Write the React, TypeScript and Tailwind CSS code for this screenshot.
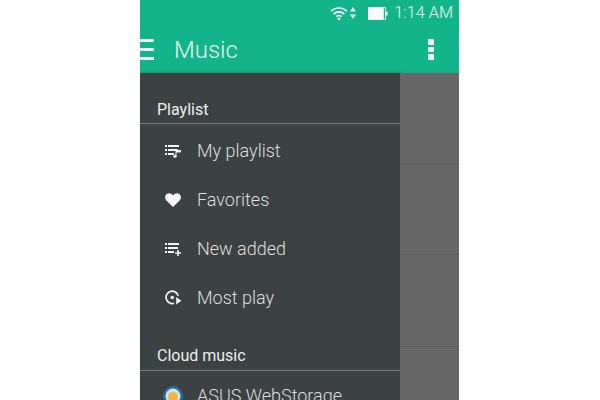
const Row = ({ icon, label }: { icon: React.ReactNode; label: string }) => (
	<div className="flex h-[49px] items-center">
		<div className="flex w-[57px] justify-center pl-[9px]">{icon}</div>
		<span className="text-[18px] font-light text-[#dcdfde]">{label}</span>
	</div>
)

const ListLines = ({ children }: { children?: React.ReactNode }) => (
	<svg width="18" height="14" viewBox="0 0 18 14" fill="#f2f4f3">
		<rect x="1" y="1" width="2" height="2" />
		<rect x="4" y="1" width="11" height="2" />
		<rect x="1" y="5" width="2" height="2" />
		<rect x="4" y="5" width="10" height="2" />
		<rect x="1" y="9" width="2" height="2" />
		<rect x="4" y="9" width="6" height="2" />
		{children}
	</svg>
)

const SectionTitle = ({ label }: { label: string }) => (
	<div className="h-[20px] pl-[17px] text-[16px] leading-[20px] text-[#eceeed]">{label}</div>
)

export default function App() {
	return (
		<div className="h-[400px] w-[600px] overflow-hidden bg-white font-['Roboto',sans-serif]">
			<div className="ml-[140px] flex h-full w-[319px] flex-col">
				<div className="h-[73px] shrink-0 bg-[#14b48b] text-white">
					<div className="flex h-[26px] items-center justify-end pr-[6px]">
						<svg width="18" height="15" viewBox="0 0 17 14" fill="none" stroke="#f4fbf8" strokeWidth="1.5">
							<path d="M1 5 A 10.5 10.5 0 0 1 16 5" />
							<path d="M3.5 7.6 A 7 7 0 0 1 13.5 7.6" />
							<path d="M6 10 A 3.5 3.5 0 0 1 11 10" />
							<circle cx="8.5" cy="12" r="1.3" fill="#f4fbf8" stroke="none" />
						</svg>
						<svg className="ml-[2px] mr-[12px]" width="6" height="12" viewBox="0 0 6 12" fill="#e4f5ef">
							<path d="M3 0 L6 4.5 H0 Z" />
							<path d="M3 12 L0 7.5 H6 Z" />
						</svg>
						<svg className="mr-[6px]" width="20" height="13" viewBox="0 0 20 13" fill="#f6fbf9">
							<rect x="0" y="0" width="15" height="13" />
							<rect x="15.4" y="0.4" width="2" height="12.2" fill="none" stroke="#f6fbf9" strokeWidth="0.8" />
							<rect x="17.5" y="4.5" width="2" height="4" />
						</svg>
						<span className="text-[16.3px] font-light leading-none text-[#e9f7f2]">1:14 AM</span>
					</div>
					<div className="flex h-[47px] items-center justify-between pr-[25px]">
						<div className="flex items-center gap-[20px]">
							<div className="flex w-[14px] flex-col gap-[6px]">
								<div className="h-[3px] bg-[#f0faf7]" />
								<div className="h-[3px] bg-[#f0faf7]" />
								<div className="h-[3px] bg-[#f0faf7]" />
							</div>
							<span className="text-[24px] font-light leading-none text-[#e6f7f2]">Music</span>
						</div>
						<div className="flex flex-col gap-[2px]">
							<div className="h-[6px] w-[6px] bg-[#eef9f6]" />
							<div className="h-[5px] w-[6px] bg-[#eef9f6]" />
							<div className="h-[6px] w-[6px] bg-[#eef9f6]" />
						</div>
					</div>
				</div>
				<div className="flex min-h-0 flex-1">
					<div className="w-[260px] shrink-0 overflow-hidden bg-[#3c4141] pt-[27px] shadow-[2px_0_3px_rgba(40,40,40,0.45)]">
						<SectionTitle label="Playlist" />
						<div className="mt-[3px] h-px bg-[#777a7a]" />
						<div className="mt-[2px]">
							<Row
								label="My playlist"
								icon={
									<ListLines>
										<path d="M12 8 V12.5 M12 6.5 H16.5 V8 H12 Z" stroke="#f2f4f3" strokeWidth="1" />
										<circle cx="11" cy="12.2" r="1.6" />
									</ListLines>
								}
							/>
							<Row
								label="Favorites"
								icon={
									<svg width="16" height="14" viewBox="0 0 16 14" fill="#f5f6f6">
										<path d="M8 14 L1.4 7.6 C-0.6 5.5 -0.2 2.4 1.7 1 C3.6 -0.4 6.4 0 8 2.4 C9.6 0 12.4 -0.4 14.3 1 C16.2 2.4 16.6 5.5 14.6 7.6 Z" />
									</svg>
								}
							/>
							<Row
								label="New added"
								icon={
									<ListLines>
										<path d="M14 8 V14 M11 11 H17" stroke="#f2f4f3" strokeWidth="1.6" />
									</ListLines>
								}
							/>
							<Row
								label="Most play"
								icon={
									<svg width="17" height="15" viewBox="0 0 16 14" fill="none" stroke="#f2f4f3" strokeWidth="1.6">
										<path d="M8.5 12.4 A 5.8 5.8 0 1 1 12.4 5.5" />
										<circle cx="6.8" cy="7" r="1.7" fill="#f2f4f3" stroke="none" />
										<path d="M10.5 6.5 L15.5 10 L10.5 13.5 Z" fill="#f2f4f3" stroke="none" />
									</svg>
								}
							/>
						</div>
						<div className="mt-[24px]">
							<SectionTitle label="Cloud music" />
						</div>
						<div className="mt-[4px] h-px bg-[#777a7a]" />
						<div className="flex h-[49px] items-center">
							<div className="flex w-[57px] justify-center pl-[9px]">
								<svg width="20" height="20" viewBox="0 0 20 20">
									<circle cx="10" cy="10" r="10" fill="#1f6f9e" />
									<circle cx="10" cy="10" r="7.5" fill="#cfe3ea" />
									<circle cx="10" cy="11" r="5" fill="#f2b445" />
								</svg>
							</div>
							<span className="text-[18px] font-light text-[#dcdfde]">ASUS WebStorage</span>
						</div>
					</div>
					<div className="flex-1 bg-[#666666] pt-[90px]">
						<div className="h-px bg-[#5b5b5b]" />
						<div className="mt-[90px] h-px bg-[#5b5b5b]" />
						<div className="mt-[91px] h-px bg-[#5b5b5b]" />
					</div>
				</div>
			</div>
		</div>
	)
}
